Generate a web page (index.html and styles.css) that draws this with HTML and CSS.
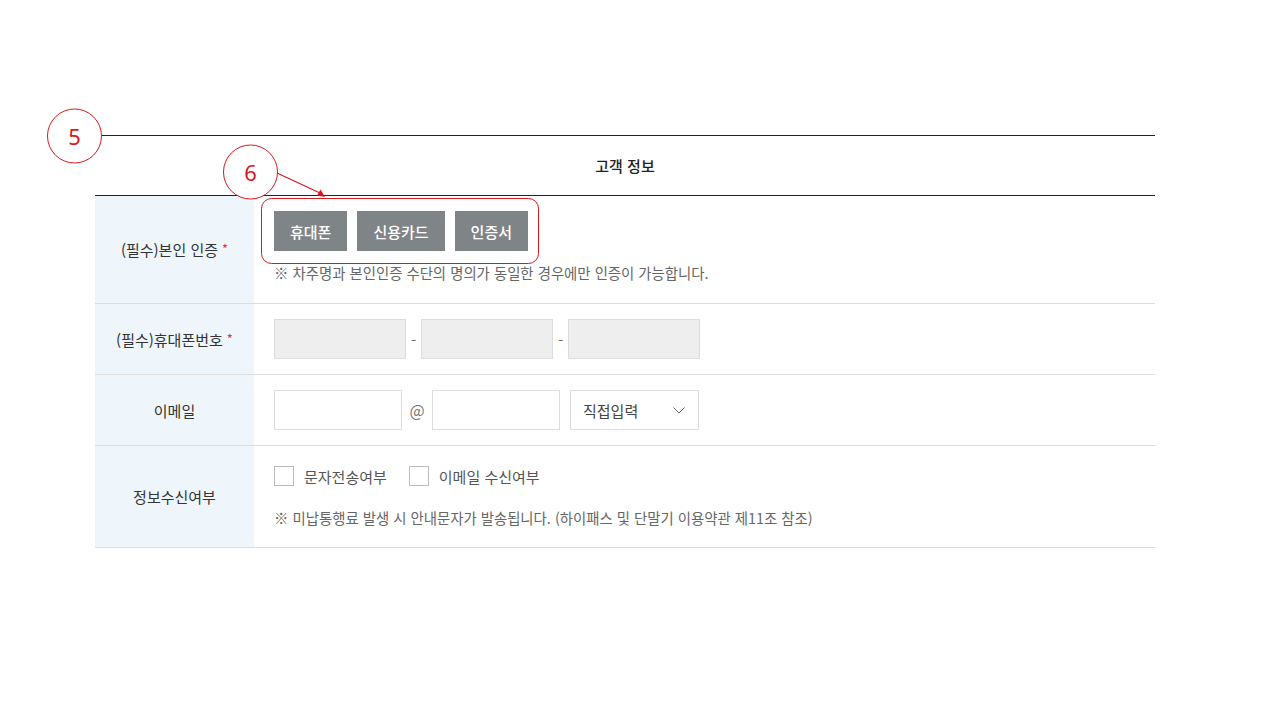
FILE: index.html
```html
<!DOCTYPE html>
<html lang="ko">
<head>
    <meta charset="UTF-8">
    <meta name="viewport" content="width=device-width, initial-scale=1.0">
    <title>고객 정보</title>
    <link rel="stylesheet" href="styles.css">
</head>
<body>

    <div class="form-wrap">
        <h2 class="form-title">고객 정보</h2>

        <div class="row row-auth">
            <div class="row-label">(필수)본인 인증<span class="req">*</span></div>
            <div class="row-field">
                <div class="auth-buttons">
                    <button class="btn-auth">휴대폰</button>
                    <button class="btn-auth">신용카드</button>
                    <button class="btn-auth">인증서</button>
                </div>
                <p class="note">※ 차주명과 본인인증 수단의 명의가 동일한 경우에만 인증이 가능합니다.</p>
            </div>
        </div>

        <div class="row">
            <div class="row-label">(필수)휴대폰번호<span class="req">*</span></div>
            <div class="row-field inline">
                <input type="text" class="input input-phone" disabled>
                <span class="sep">-</span>
                <input type="text" class="input input-phone" disabled>
                <span class="sep">-</span>
                <input type="text" class="input input-phone" disabled>
            </div>
        </div>

        <div class="row">
            <div class="row-label">이메일</div>
            <div class="row-field inline">
                <input type="text" class="input input-mail">
                <span class="sep at">@</span>
                <input type="text" class="input input-mail">
                <div class="select-box">
                    <span>직접입력</span>
                    <svg width="12" height="7" viewBox="0 0 12 7"><path d="M0.5 0.5l5.5 5.5 5.5-5.5" fill="none" stroke="#666" stroke-width="1"/></svg>
                </div>
            </div>
        </div>

        <div class="row row-agree">
            <div class="row-label">정보수신여부</div>
            <div class="row-field">
                <div class="checks">
                    <label class="check"><span class="box"></span>문자전송여부</label>
                    <label class="check"><span class="box"></span>이메일 수신여부</label>
                </div>
                <p class="note">※ 미납통행료 발생 시 안내문자가 발송됩니다. (하이패스 및 단말기 이용약관 제11조 참조)</p>
            </div>
        </div>
    </div>

    <!-- annotation marks drawn over the form -->
    <svg class="marks" width="1280" height="720" viewBox="0 0 1280 720">
        <circle cx="74.5" cy="136" r="27" fill="#fff" stroke="#d7191f" stroke-width="1"/>
        <text x="74.5" y="145" text-anchor="middle" class="mark-num">5</text>
        <circle cx="250.5" cy="172" r="27" fill="#fff" stroke="#d7191f" stroke-width="1"/>
        <text x="250.5" y="181" text-anchor="middle" class="mark-num">6</text>
        <line x1="277" y1="173" x2="320" y2="193" stroke="#d7191f" stroke-width="1.2"/>
        <path d="M325 197l-8-1.5 3.5-6z" fill="#d7191f"/>
        <rect x="261.5" y="198.5" width="277" height="65" rx="10" fill="none" stroke="#d7191f" stroke-width="1"/>
    </svg>

</body>
</html>
```

FILE: styles.css
```css
body {
    margin: 0;
    font-family: "Noto Sans CJK KR", "Noto Sans", sans-serif;
    font-size: 15px;
    color: #333;
    background: #fff;
    position: relative;
    width: 1280px;
    height: 720px;
    overflow: hidden;
}
.form-wrap {
    width: 1060px;
    margin: 135px 0 0 95px;
}
.form-title {
    margin: 0;
    height: 59px;
    line-height: 59px;
    border-top: 1px solid #222;
    border-bottom: 1px solid #222;
    text-align: center;
    font-size: 15px;
    font-weight: 500;
    color: #222;
}
.row {
    display: grid;
    grid-template-columns: 159px 1fr;
    border-bottom: 1px solid #ddd;
}
.row-label {
    background: #eef6fc;
    display: flex;
    align-items: center;
    justify-content: center;
    color: #333;
}
.req {
    color: #e5323f;
    font-size: 13px;
    margin-left: 4px;
    position: relative;
    top: -1px;
}
.row-field {
    padding: 15px 20px;
}
.row-field.inline {
    display: flex;
    align-items: center;
}
.row-auth .row-field {
    padding: 15px 20px 20px;
}
.auth-buttons {
    display: flex;
    gap: 10px;
}
.btn-auth {
    height: 40px;
    padding: 0 16px;
    border: none;
    background: #7f8487;
    color: #fff;
    font-family: inherit;
    font-size: 15px;
    font-weight: 500;
    cursor: pointer;
}
.note {
    margin: 12px 0 0;
    line-height: 20px;
    font-size: 14.4px;
    color: #666;
}
.input {
    height: 40px;
    box-sizing: border-box;
    border: 1px solid #ddd;
    background: #fff;
    margin: 0;
    padding: 0 10px;
    font-family: inherit;
}
.input-phone {
    width: 132px;
    background: #eee;
}
.input-mail {
    width: 128px;
}
.sep {
    width: 15px;
    text-align: center;
    color: #666;
}
.sep.at {
    width: 30px;
    font-size: 16px;
    color: #777;
}
.select-box {
    width: 129px;
    height: 40px;
    box-sizing: border-box;
    margin-left: 10px;
    border: 1px solid #ddd;
    display: flex;
    align-items: center;
    justify-content: space-between;
    padding: 0 13px 0 12px;
    color: #444;
}
.row-agree .row-field {
    padding: 18px 20px 19px;
}
.row-agree .note {
    margin-top: 20px;
}
.checks {
    display: flex;
    height: 24px;
    align-items: center;
}
.check {
    display: flex;
    align-items: center;
    margin-right: 22px;
    color: #555;
}
.box {
    width: 18px;
    height: 18px;
    border: 1px solid #bbb;
    margin-right: 10px;
    background: #fff;
}
.marks {
    position: absolute;
    left: 0;
    top: 0;
    pointer-events: none;
}
.mark-num {
    font-family: "Noto Sans", sans-serif;
    font-size: 22px;
    fill: #d7191f;
}
```
